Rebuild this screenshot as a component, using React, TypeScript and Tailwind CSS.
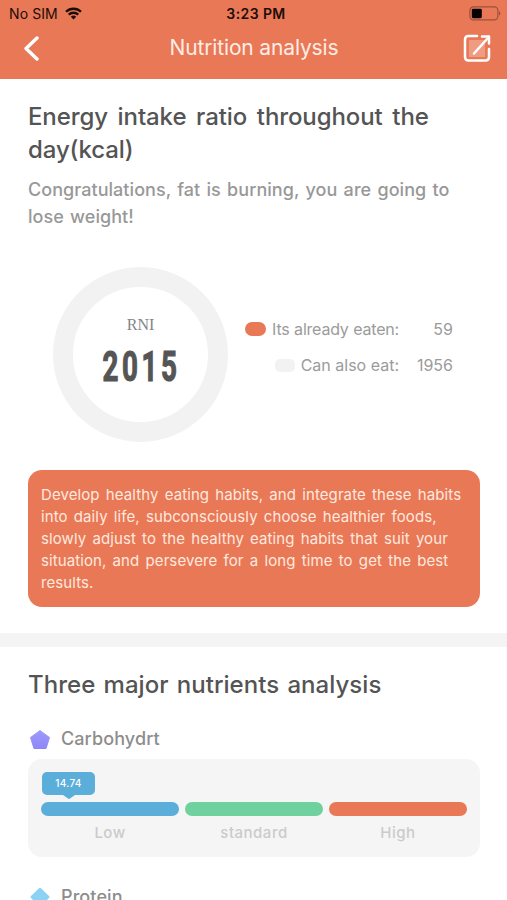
import React from 'react';

interface Level {
    label: string;
    color: string;
}

const levels: Level[] = [
    { label: 'Low', color: 'bg-[#5badda]' },
    { label: 'standard', color: 'bg-[#6fd19d]' },
    { label: 'High', color: 'bg-[#e97857]' },
];

const tipLines = [
    'Develop healthy eating habits, and integrate these habits',
    'into daily life, subconsciously choose healthier foods,',
    'slowly adjust to the healthy eating habits that suit your',
    'situation, and persevere for a long time to get the best',
    'results.',
];

const StatusBar: React.FC = () => (
    <div className="grid grid-cols-3 items-center h-[27px] pl-[9px] pr-[6px] text-[14px] leading-[27px] text-[#1c0d08]">
        <div className="flex items-center gap-[7px]">
            <span className="tracking-[0.1px]">No SIM</span>
            <svg className="w-[17px] h-[13px]" viewBox="0 0 17 13" fill="none" stroke="#1c0d08" strokeWidth="2.3">
                <path d="M1 4.8a10.7 10.7 0 0 1 15 0" />
                <path d="M3.7 7.7a6.9 6.9 0 0 1 9.6 0" />
                <path d="M8.5 12.6L5.8 9.8a4 4 0 0 1 5.4 0z" fill="#1c0d08" stroke="none" />
            </svg>
        </div>
        <span className="pl-[2px] text-center font-semibold tracking-[0.4px]">3:23 PM</span>
        <svg className="w-[32px] h-[15px] justify-self-end" viewBox="0 0 32 15" fill="none">
            <rect x="0.9" y="0.9" width="28" height="13" rx="3.6" stroke="#99513c" strokeWidth="1.2" />
            <rect x="2.8" y="2.8" width="10" height="9.4" rx="1.4" fill="#080302" />
            <path d="M30 5.3v4.2c1.8-.6 1.8-3.6 0-4.2z" fill="#99513c" />
        </svg>
    </div>
);

const Header: React.FC = () => (
    <header className="h-[79px] bg-[#e97857]">
        <StatusBar />
        <div className="flex items-center justify-between h-[42px] pl-[23px] pr-[16px]">
            <button>
                <svg className="w-[17px] h-[26px]" viewBox="0 0 17 26" fill="none" stroke="#fff" strokeWidth="3.4" strokeLinecap="round" strokeLinejoin="round">
                    <path d="M14 3L3 13.500l11 10.500" />
                </svg>
            </button>
            <h1 className="pl-[5px] text-[21px] text-[#ffece5] tracking-[-0.15px]">Nutrition analysis</h1>
            <button>
                <svg className="w-[28px] h-[30px]" viewBox="0 0 28 30" fill="none" stroke="#fff" strokeWidth="2.5" strokeLinecap="round">
                    <rect x="6" y="7" width="16" height="17" fill="#f09c83" stroke="none" />
                    <path d="M14 3H5.500Q2 3 2 6.500V24Q2 27.500 5.500 27.500H22.500Q26 27.500 26 24V16" />
                    <path d="M11 20.500L24.500 5.500" />
                    <path d="M19 3.500h7v7" strokeLinejoin="round" />
                </svg>
            </button>
        </div>
    </header>
);

const NutrientCard: React.FC<{ value: string }> = ({ value }) => (
    <div className="h-[98.5px] rounded-[14px] bg-[#f5f5f5] pt-[13px] px-[13px]">
        <div className="ml-[1px] w-[53px] h-[30px]">
            <div className="h-[23px] rounded-[5px] bg-[#5badda] text-center text-[10px] leading-[22px] font-medium text-white tracking-[0.3px]">{value}</div>
            <svg className="w-[12px] h-[4px] mx-auto" viewBox="0 0 12 4">
                <path d="M0 0h12L7 3.500q-1 .6-2 0z" fill="#5badda" />
            </svg>
        </div>
        <div className="grid grid-cols-3 gap-[6px]">
            {levels.map((level) => (
                <div key={level.label}>
                    <div className={`h-[14px] rounded-full ${level.color}`} />
                    <p className="mt-[5px] text-center text-[15px] leading-[24px] font-medium text-[#cbcbcb] tracking-[0.5px]">{level.label}</p>
                </div>
            ))}
        </div>
    </div>
);

const App: React.FC = () => {
    return (
        <div className="w-full h-[900px] overflow-hidden bg-white font-[Inter,'Liberation_Sans',sans-serif]">
            <Header />

            <section className="h-[554px] pl-[28px] pr-[27px] pt-[21px] whitespace-nowrap">
                <h2 className="text-[24px] leading-[33px] font-medium text-[#545454] tracking-[-0.1px] [word-spacing:3.4px]">
                    Energy intake ratio throughout the<br />day(kcal)
                </h2>
                <p className="mt-[10px] text-[18px] leading-[27px] font-medium text-[#989898] tracking-[0.05px] [word-spacing:1.4px]">
                    Congratulations, fat is burning, you are going to<br />lose weight!
                </p>

                <div className="flex mt-[37px] ml-[25px]">
                    <div className="flex flex-col items-center w-[175px] h-[175px] rounded-full border-[20px] border-[#f2f2f2] pt-[26px]">
                        <span className="font-['Liberation_Serif',serif] text-[16px] leading-[24px] text-[#858585]">RNI</span>
                        <span className="mt-[8px] pl-[4px] font-[Roboto,sans-serif] text-[42px] leading-[44px] font-bold text-[#555] tracking-[5.5px] scale-x-[0.66] [-webkit-text-stroke:1.2px_#555]">2015</span>
                    </div>
                    <div className="flex flex-col items-end gap-[12px] w-[225px] pt-[50px] text-[16px] leading-[24px] text-[#9b9b9b]">
                        <div className="flex items-center">
                            <span className="w-[21px] h-[14px] mr-[6px] rounded-full bg-[#e97857]" />
                            <span className="tracking-[-0.2px] [word-spacing:0.3px]">Its already eaten:</span>
                            <span className="w-[54px] text-right">59</span>
                        </div>
                        <div className="flex items-center">
                            <span className="w-[20px] h-[13px] mr-[6px] rounded-[5px] bg-[#f2f2f2]" />
                            <span>Can also eat:</span>
                            <span className="w-[54px] text-right">1956</span>
                        </div>
                    </div>
                </div>

                <div className="mt-[28px] h-[137px] rounded-[14px] bg-[#e97857] pt-[14px] pl-[13px] text-[15px] leading-[22px] text-[#ffe9df] tracking-[0.09px] [word-spacing:1.9px]">
                    {tipLines.map((line) => (
                        <p key={line}>{line}</p>
                    ))}
                </div>
            </section>

            <div className="h-[14px] bg-[#f4f4f4]" />

            <section className="pl-[28px] pr-[27px] pt-[21px] whitespace-nowrap">
                <h2 className="text-[24px] leading-[33px] font-medium text-[#545454] tracking-[0.05px] [word-spacing:1.7px]">Three major nutrients analysis</h2>
                <div className="flex items-center h-[26px] mt-[25px] mb-[6.5px]">
                    <svg className="w-[20px] h-[19px] ml-[2px] mr-[11px]" viewBox="0 0 20 19">
                        <defs>
                            <linearGradient id="carb" x1="0" y1="0" x2="0" y2="1">
                                <stop offset="0" stopColor="#a19afb" />
                                <stop offset="1" stopColor="#8c88f7" />
                            </linearGradient>
                        </defs>
                        <path d="M10 .5l9.500 7L16 18.500H4L.5 7.500z" fill="url(#carb)" stroke="url(#carb)" strokeLinejoin="round" />
                    </svg>
                    <h3 className="text-[18px] leading-[26px] font-medium text-[#8d8d8d] tracking-[0.1px]">Carbohydrt</h3>
                </div>
                <NutrientCard value="14.74" />
                <div className="flex items-center h-[26px] mt-[27px]">
                    <svg className="w-[20px] h-[20px] ml-[2px] mr-[11px]" viewBox="0 0 20 20">
                        <path d="M9 1.200q1-1 2 0l8 7.800q1 1 0 2l-8 7.800q-1 1-2 0L1 11q-1-1 0-2z" fill="#8bd2f5" />
                    </svg>
                    <h3 className="text-[18px] leading-[26px] font-medium text-[#8d8d8d] tracking-[0.1px]">Protein</h3>
                </div>
            </section>
        </div>
    );
};

export default App;
